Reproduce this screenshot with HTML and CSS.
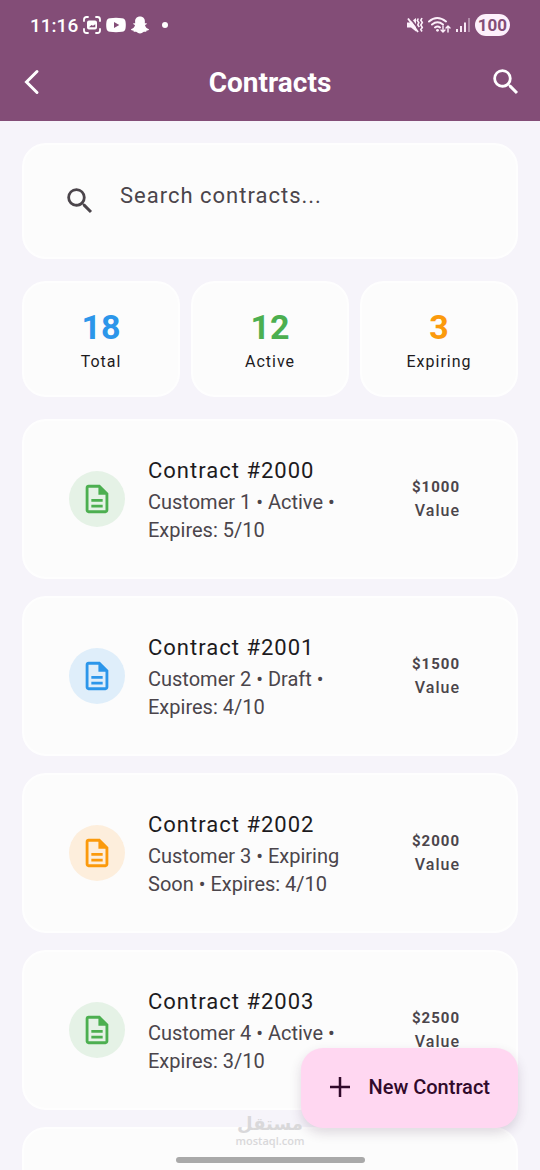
FILE: index.html
```html
<!DOCTYPE html>
<html lang="en">
<head>
<meta charset="utf-8">
<meta name="viewport" content="width=device-width, initial-scale=1">
<title>Contracts</title>
<link rel="stylesheet" href="styles.css">
</head>
<body>
<svg class="symbols" aria-hidden="true">
  <symbol id="doc" viewBox="0 0 24 24"><path fill="currentColor" d="M8 16h8v2H8zm0-4h8v2H8zm6-10H6c-1.100 0-2 .9-2 2v16c0 1.100.89 2 1.990 2H18c1.100 0 2-.9 2-2V8l-6-6zm4 18H6V4h7v5h5v11z"/></symbol>
  <symbol id="search" viewBox="0 0 24 24"><path fill="currentColor" d="M15.500 14h-.79l-.28-.27A6.471 6.471 0 0 0 16 9.500 6.500 6.500 0 1 0 9.500 16c1.610 0 3.090-.59 4.230-1.570l.27.28v.79l5 4.990L20.490 19l-4.990-5zm-6 0C7.010 14 5 11.990 5 9.500S7.010 5 9.500 5 14 7.010 14 9.500 11.990 14 9.500 14z"/></symbol>
</svg>
<div class="app">
  <header class="top">
    <div class="status">
      <div class="status-group">
        <span class="clock">11:16</span>
        <svg class="status-icon" viewBox="0 0 20 20" fill="none" stroke="currentColor" stroke-width="1.800" stroke-linecap="round"><path d="M2 6V4.500Q2 2 4.500 2H6M14 2h1.500Q18 2 18 4.500V6M18 14v1.500Q18 18 15.500 18H14M6 18H4.500Q2 18 2 15.500V14"/><path d="M7 5.500h6q2 0 2 2v5q0 2-2 2H7q-2 0-2-2v-5q0-2 2-2zM7 12.300h6.300v-3l-2.300 1.500-1.500-.8z" fill="currentColor" fill-rule="evenodd" stroke="none"/></svg>
        <svg class="status-icon" viewBox="0 0 20 20"><path fill="currentColor" fill-rule="evenodd" d="M4 3.200Q10 2.500 16 3.200q3.200.2 3.500 3.300.6 3.500 0 7-.3 3.100-3.500 3.300-6 .7-12 0Q.8 16.600.5 13.500q-.6-3.500 0-7Q.8 3.400 4 3.200zM8 7v6l5.300-3z"/></svg>
        <svg class="status-icon" viewBox="0 0 20 20"><path fill="currentColor" d="M10 1.500c3.200 0 5 2.200 4.900 5.200l-.1 1.500c.8.300 1.700-.5 2 .3.200.8-1.400 1.100-1.800 1.700.5 2 1.700 3.300 4 4 .4 1-1.500 1.200-2.300 1.400-.4.400-.1 1-.7 1.200-.8.100-1.700-.3-2.600.2-1.100.7-1.800 1.500-3.400 1.500s-2.300-.8-3.400-1.500c-.9-.5-1.800-.1-2.600-.2-.6-.2-.3-.8-.7-1.200C2.500 15.400.6 15.200 1 14.200c2.300-.7 3.500-2 4-4-.4-.6-2-.9-1.800-1.700.3-.8 1.200 0 2-.3l-.1-1.500C5 3.700 6.800 1.500 10 1.500z"/></svg>
        <span class="more-dot"></span>
      </div>
      <div class="status-group status-right">
        <svg class="signal-icon" viewBox="0 0 18 20" fill="none" stroke="currentColor" stroke-width="1.600"><path d="M1 7.500h3L10 3v13.500L5 12.500H1z" fill="currentColor" stroke="none"/><path d="M3.500 2l9 12" stroke="#834d77" stroke-width="1.800"/><path d="M2 3.500L12 17" stroke-width="1.900"/><path d="M12.300 3.500l-1 2 1.500 2-1 2.500 1.500 2M16 3l-1.200 2.300 1.500 2.200-1.500 2.500 1.500 2.500-1.500 2 1.200 2"/></svg>
        <svg class="wifi-icon" viewBox="0 0 24 20" fill="none" stroke="currentColor" stroke-width="1.900" stroke-linecap="round"><path d="M2 6.500q8-7 17 0M5 9.600q5.500-4.500 11 0M8 12.500q2.500-2 5 0"/><circle cx="10.500" cy="15.300" r="1.400" fill="currentColor" stroke="none"/><path stroke-width="1.400" d="M16 11v6M14 15l2 2 2-2M21 17v-6M19 13l2-2 2 2"/></svg>
        <svg class="signal-icon" viewBox="0 0 18 20" fill="none" stroke="currentColor" stroke-width="1.900"><path d="M3 14v3M7 11v6M11 7.500V17"/><path d="M15 3v14" opacity=".4"/></svg>
        <span class="battery">100</span>
      </div>
    </div>
    <div class="bar">
      <button class="icon-button" type="button" aria-label="Back"><svg class="back-icon" viewBox="0 0 24 34" fill="none" stroke="currentColor" stroke-width="3" stroke-linecap="round"><path d="M17 6.500L6.500 17 17 27.500"/></svg></button>
      <h1 class="title">Contracts</h1>
      <button class="icon-button icon-button-end" type="button" aria-label="Search"><svg class="icon"><use href="#search"/></svg></button>
    </div>
  </header>

  <main class="content">
    <label class="card search">
      <svg class="icon" aria-hidden="true"><use href="#search"/></svg>
      <input class="search-input" type="text" placeholder="Search contracts..." aria-label="Search contracts">
    </label>

    <section class="stats">
      <div class="card stat"><span class="stat-number blue">18</span><span class="stat-label">Total</span></div>
      <div class="card stat"><span class="stat-number green">12</span><span class="stat-label">Active</span></div>
      <div class="card stat"><span class="stat-number orange">3</span><span class="stat-label">Expiring</span></div>
    </section>

    <section class="list">
      <article class="card contract">
        <span class="avatar green"><svg class="icon"><use href="#doc"/></svg></span>
        <div class="info"><h2 class="name">Contract #2000</h2><p class="detail">Customer 1 • Active • Expires: 5/10</p></div>
        <div class="value"><span class="amount">$1000</span><span>Value</span></div>
      </article>
      <article class="card contract">
        <span class="avatar blue"><svg class="icon"><use href="#doc"/></svg></span>
        <div class="info"><h2 class="name">Contract #2001</h2><p class="detail">Customer 2 • Draft • Expires: 4/10</p></div>
        <div class="value"><span class="amount">$1500</span><span>Value</span></div>
      </article>
      <article class="card contract">
        <span class="avatar orange"><svg class="icon"><use href="#doc"/></svg></span>
        <div class="info"><h2 class="name">Contract #2002</h2><p class="detail">Customer 3 • Expiring Soon • Expires: 4/10</p></div>
        <div class="value"><span class="amount">$2000</span><span>Value</span></div>
      </article>
      <article class="card contract">
        <span class="avatar green"><svg class="icon"><use href="#doc"/></svg></span>
        <div class="info"><h2 class="name">Contract #2003</h2><p class="detail">Customer 4 • Active • Expires: 3/10</p></div>
        <div class="value"><span class="amount">$2500</span><span>Value</span></div>
      </article>
      <article class="card contract"></article>
    </section>
  </main>

  <button class="fab" type="button"><svg class="plus" viewBox="0 0 20 20" stroke="currentColor" stroke-width="2.500" aria-hidden="true"><path d="M10 0v20M0 10h20"/></svg>New Contract</button>
  <div class="watermark"><span class="watermark-name" lang="ar">مستقل</span><span class="watermark-site">mostaql.com</span></div>
  <div class="home-handle"></div>
</div>
</body>
</html>
```
FILE: styles.css
```css
* { box-sizing: border-box; }
body { margin: 0; font-family: Roboto, "Liberation Sans", sans-serif; color: #1d1b1e; background: #f6f4fa; }
h1, h2, p { margin: 0; font-weight: 400; }
button { border: 0; background: none; font: inherit; color: inherit; padding: 0; }
svg { display: block; flex: none; }
.symbols { position: absolute; width: 0; height: 0; }
.app { position: relative; display: flex; flex-direction: column; height: 100vh; overflow: hidden; }

.top { flex: none; background: #834d77; color: #fff; padding-bottom: 7px; }
.status { display: flex; justify-content: space-between; align-items: center; height: 50px; padding: 0 30px; }
.status-group { display: flex; align-items: center; gap: 4px; }
.clock { font-size: 19px; font-weight: 500; }
.status-icon { width: 20px; height: 20px; }
.more-dot { width: 6px; height: 6px; margin-left: 8px; border-radius: 50%; background: #fff; }
.status-right { color: #fdf0fb; gap: 3px; }
.signal-icon { width: 18px; height: 20px; }
.wifi-icon { width: 24px; height: 20px; }
.battery { display: flex; align-items: center; height: 22px; padding: 0 3px; border-radius: 11px; background: #fdf0fb; color: #834d77; font-size: 17px; font-weight: 700; }
.bar { display: grid; grid-template-columns: 68px 1fr 68px; align-items: center; height: 64px; }
.icon-button { display: flex; align-items: center; height: 56px; padding: 0 0 0 20px; }
.icon-button-end { justify-content: flex-end; padding: 0 17px 0 0; }
.back-icon { width: 24px; height: 34px; }
.title { text-align: center; font-size: 28px; font-weight: 700; }
.icon { width: 34px; height: 34px; }

.content { flex: 1; min-height: 0; padding: 22px 22px 0; overflow: hidden; }
.card { background: #fcfcfc; border: 2px solid #fefefe; border-radius: 24px; }
.search { display: flex; align-items: center; height: 116px; padding: 0 39px; gap: 23px; color: #4b454b; }
.search-input { flex: 1; min-width: 0; height: 48px; padding: 0 0 12px; border: 0; outline: 0; background: transparent; font: inherit; font-size: 22px; letter-spacing: 1px; color: inherit; }
.search-input::placeholder { color: inherit; opacity: 1; }
.stats { display: grid; grid-template-columns: repeat(3, 1fr); gap: 11px; margin: 22px 0; }
.stat { display: flex; flex-direction: column; text-align: center; padding: 21px 0; }
.stat-number { font-size: 34px; font-weight: 700; line-height: 46px; }
.stat-label { font-size: 16px; line-height: 24px; letter-spacing: 1px; }
.blue { color: #2c96ea; }
.green { color: #4caf50; }
.orange { color: #fb9a0c; }

.list { display: flex; flex-direction: column; gap: 17px; }
.contract { display: flex; align-items: center; min-height: 160px; padding: 33px 56px 33px 45px; gap: 23px; }
.avatar { display: grid; place-items: center; flex: none; width: 56px; height: 56px; border-radius: 50%; }
.avatar.green { background: #e5f2e6; }
.avatar.blue { background: #dfeefa; }
.avatar.orange { background: #fdeedc; }
.info { flex: 1; min-width: 0; }
.name { font-size: 22px; line-height: 34px; letter-spacing: 1px; }
.detail { max-width: 220px; font-size: 20px; line-height: 28px; color: #4b454b; }
.value { display: flex; flex-direction: column; align-items: flex-end; font-size: 16px; font-weight: 500; line-height: 24px; letter-spacing: 1px; color: #4b454b; }
.amount { font-size: 15px; font-weight: 700; }

.fab { position: absolute; right: 22px; bottom: 42px; display: flex; align-items: center; gap: 18px; height: 80px; padding: 0 28px 2px 29px; border-radius: 22px; background: #ffd7f1; color: #310a2b; font-size: 20px; font-weight: 500; box-shadow: 0 5px 12px rgba(60, 30, 70, .16); }
.plus { width: 20px; height: 20px; }
.watermark { position: absolute; left: 0; right: 0; bottom: 23px; display: flex; flex-direction: column; align-items: center; color: #d9d8da; font-weight: 700; }
.watermark-name { font-family: "DejaVu Sans", sans-serif; font-size: 18px; line-height: 22px; }
.watermark-site { font-family: "Open Sans", sans-serif; font-size: 11px; font-weight: 600; line-height: 12px; }
.home-handle { position: absolute; left: 50%; bottom: 7px; width: 35%; height: 6px; margin-left: -17.5%; border-radius: 3px; background: #a9a9a9; }
```
